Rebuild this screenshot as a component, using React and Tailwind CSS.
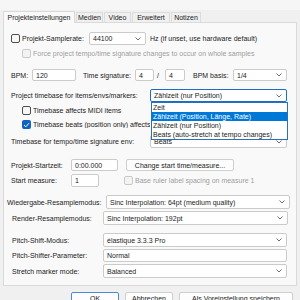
import React from 'react';

const Chevron = () => (
  <svg width="6" height="4" viewBox="0 0 6 4" className="flex-shrink-0">
    <polyline points="0.5,0.5 3,3 5.5,0.5" fill="none" stroke="#5f5f5f" strokeWidth="0.9" />
  </svg>
);

const Select = ({ value, w, h = 'h-[13px]', focused }) => (
  <div
    className={`${w} ${h} flex items-center justify-between pl-[3px] pr-[4px] bg-white rounded-[2px] border ${
      focused ? 'border-[#1a6ec7]' : 'border-[#cbcbcb]'
    }`}
  >
    <span className="whitespace-nowrap">{value}</span>
    <Chevron />
  </div>
);

const Input = ({ value, w, h = 'h-[12px]' }) => (
  <div className={`${w} ${h} flex items-center pl-[3px] bg-white rounded-[2px] border border-[#cbcbcb]`}>
    <span className="whitespace-nowrap">{value}</span>
  </div>
);

const Check = ({ checked, disabled }) => {
  if (checked) {
    return (
      <div className="w-[9px] h-[9px] rounded-[2px] bg-[#0f64c0] flex items-center justify-center flex-shrink-0">
        <svg width="7" height="6" viewBox="0 0 7 6">
          <polyline points="1,3 2.8,4.8 6,1.2" fill="none" stroke="#fff" strokeWidth="1" />
        </svg>
      </div>
    );
  }
  return (
    <div
      className={`w-[9px] h-[9px] rounded-[2px] border flex-shrink-0 ${
        disabled ? 'border-[#c9c9c9] bg-[#f3f3f3]' : 'border-[#4d4d4d] bg-[#f7f7f7]'
      }`}
    />
  );
};

const Label = ({ children, w }) => (
  <span className={`${w} flex-shrink-0 whitespace-nowrap`}>{children}</span>
);

export default function App() {
  const tabs = [
    { label: 'Medien', w: 'w-[27px]' },
    { label: 'Video', w: 'w-[27px]' },
    { label: 'Erweitert', w: 'w-[38px]' },
    { label: 'Notizen', w: 'w-[30px]' },
  ];

  return (
    <div className="w-[300px] h-[300px] overflow-hidden bg-[#f0f0f0] text-[7px] leading-none text-[#1b1b1b] font-['Liberation_Sans',Arial,sans-serif]">
      {/* title strip */}
      <div className="h-[10px] bg-[#f6f6f6]" />

      {/* tabs */}
      <div className="h-[12px] flex items-end pl-[3px]">
        <div className="w-[72px] h-[12px] bg-[#f9f9f9] border border-b-0 border-[#d9d9d9] flex items-center justify-center relative z-10 -mb-[1px]">
          Projekteinstellungen
        </div>
        {tabs.map(t => (
          <div
            key={t.label}
            className={`${t.w} h-[10px] ml-[1px] bg-[#f0f0f0] border border-b-0 border-[#dcdcdc] flex items-center justify-center`}
          >
            {t.label}
          </div>
        ))}
      </div>

      {/* panel */}
      <div className="ml-[3px] w-[294px] h-[264px] border border-[#dadada] bg-[#f9f9f9] relative">
        {/* samplerate */}
        <div className="mt-[9px] h-[13px] flex items-center pl-[7px]">
          <Check />
          <Label w="w-[67px] ml-[2px]">Projekt-Samplerate:</Label>
          <Select value="44100" w="w-[57px]" />
          <span className="ml-[4px] whitespace-nowrap">Hz (if unset, use hardware default)</span>
        </div>

        <div className="mt-[4px] h-[9px] flex items-center pl-[18px]">
          <Check disabled />
          <span className="ml-[2px] whitespace-nowrap text-[#9d9d9d]">
            Force project tempo/time signature changes to occur on whole samples
          </span>
        </div>

        {/* bpm row */}
        <div className="mt-[11px] h-[12px] flex items-center pl-[7px]">
          <Label w="w-[21px]">BPM:</Label>
          <Input value="120" w="w-[44px]" />
          <Label w="w-[52px] ml-[7px]">Time signature:</Label>
          <Input value="4" w="w-[19px]" />
          <Label w="w-[8px] ml-[3px]">/</Label>
          <Input value="4" w="w-[20px]" />
          <Label w="w-[40px] ml-[8px]">BPM basis:</Label>
          <Select value="1/4" w="w-[54px]" h="h-[12px]" />
        </div>

        {/* timebase */}
        <div className="mt-[8px] h-[13px] flex items-center pl-[7px]">
          <Label w="w-[139px]">Project timebase for items/envs/markers:</Label>
          <Select value="Zählzeit (nur Position)" w="w-[137px]" focused />
        </div>

        <div className="mt-[4px] h-[9px] flex items-center pl-[18px]">
          <Check />
          <span className="ml-[2px] whitespace-nowrap">Timebase affects MIDI items</span>
        </div>

        <div className="mt-[5px] h-[9px] flex items-center pl-[18px]">
          <Check checked />
          <span className="ml-[2px] w-[117px] overflow-hidden whitespace-nowrap">Timebase beats (position only) affects tempo</span>
        </div>

        <div className="mt-[6px] h-[13px] flex items-center pl-[7px]">
          <Label w="w-[139px]">Timebase for tempo/time signature env:</Label>
          <Select value="Beats" w="w-[137px]" />
        </div>

        {/* start */}
        <div className="mt-[11px] h-[12px] flex items-center pl-[7px]">
          <Label w="w-[60px]">Projekt-Startzeit:</Label>
          <Input value="0:00.000" w="w-[47px]" />
          <div className="ml-[8px] w-[108px] h-[12px] bg-[#fdfdfd] border border-[#cfcfcf] rounded-[2px] flex items-center justify-center whitespace-nowrap">
            Change start time/measure...
          </div>
        </div>

        <div className="mt-[3px] h-[13px] flex items-center pl-[7px]">
          <Label w="w-[60px]">Start measure:</Label>
          <Input value="1" w="w-[28px]" h="h-[13px]" />
          <div className="ml-[25px]">
            <Check disabled />
          </div>
          <span className="ml-[2px] whitespace-nowrap text-[#9d9d9d]">Base ruler label spacing on measure 1</span>
        </div>

        {/* resample */}
        <div className="mt-[8px] h-[14px] flex items-center pl-[3px]">
          <Label w="w-[99px]">Wiedergabe-Resamplemodus:</Label>
          <Select value="Sinc Interpolation: 64pt (medium quality)" w="w-[184px]" h="h-[14px]" />
        </div>

        <div className="mt-[2px] h-[14px] flex items-center pl-[8px]">
          <Label w="w-[91px]">Render-Resamplemodus:</Label>
          <Select value="Sinc Interpolation: 192pt" w="w-[185px]" h="h-[14px]" />
        </div>

        {/* pitch */}
        <div className="mt-[8px] h-[14px] flex items-center pl-[8px]">
          <Label w="w-[91px]">Pitch-Shift-Modus:</Label>
          <Select value="élastique 3.3.3 Pro" w="w-[184px]" h="h-[14px]" />
        </div>

        <div className="mt-[2px] h-[13px] flex items-center pl-[8px]">
          <Label w="w-[91px]">Pitch-Shifter-Parameter:</Label>
          <Input value="Normal" w="w-[184px]" h="h-[13px]" />
        </div>

        <div className="mt-[2px] h-[14px] flex items-center pl-[8px]">
          <Label w="w-[91px]">Stretch marker mode:</Label>
          <Select value="Balanced" w="w-[184px]" h="h-[14px]" />
        </div>

        {/* open dropdown list */}
        <div className="absolute left-[147px] top-[79px] w-[137px] bg-white border border-[#2a6fb8] z-20">
          <div className="h-[9px] flex items-center pl-[1px]">Zeit</div>
          <div className="h-[9px] flex items-center pl-[1px] bg-[#0078d7] text-white">Zählzeit (Position, Länge, Rate)</div>
          <div className="h-[9px] flex items-center pl-[1px]">Zählzeit (nur Position)</div>
          <div className="h-[9px] flex items-center pl-[1px]">Beats (auto-stretch at tempo changes)</div>
        </div>
      </div>

      {/* buttons */}
      <div className="mt-[6px] flex pl-[71px]">
        <div className="w-[48px] h-[13px] bg-[#fdfdfd] border border-[#4a8ad4] rounded-[2px] flex items-center justify-center">OK</div>
        <div className="ml-[6px] w-[48px] h-[13px] bg-[#fdfdfd] border border-[#cfcfcf] rounded-[2px] flex items-center justify-center">Abbrechen</div>
        <div className="ml-[6px] w-[114px] h-[13px] bg-[#fdfdfd] border border-[#cfcfcf] rounded-[2px] flex items-center justify-center whitespace-nowrap">
          Als Voreinstellung speichern
        </div>
      </div>
    </div>
  );
}
